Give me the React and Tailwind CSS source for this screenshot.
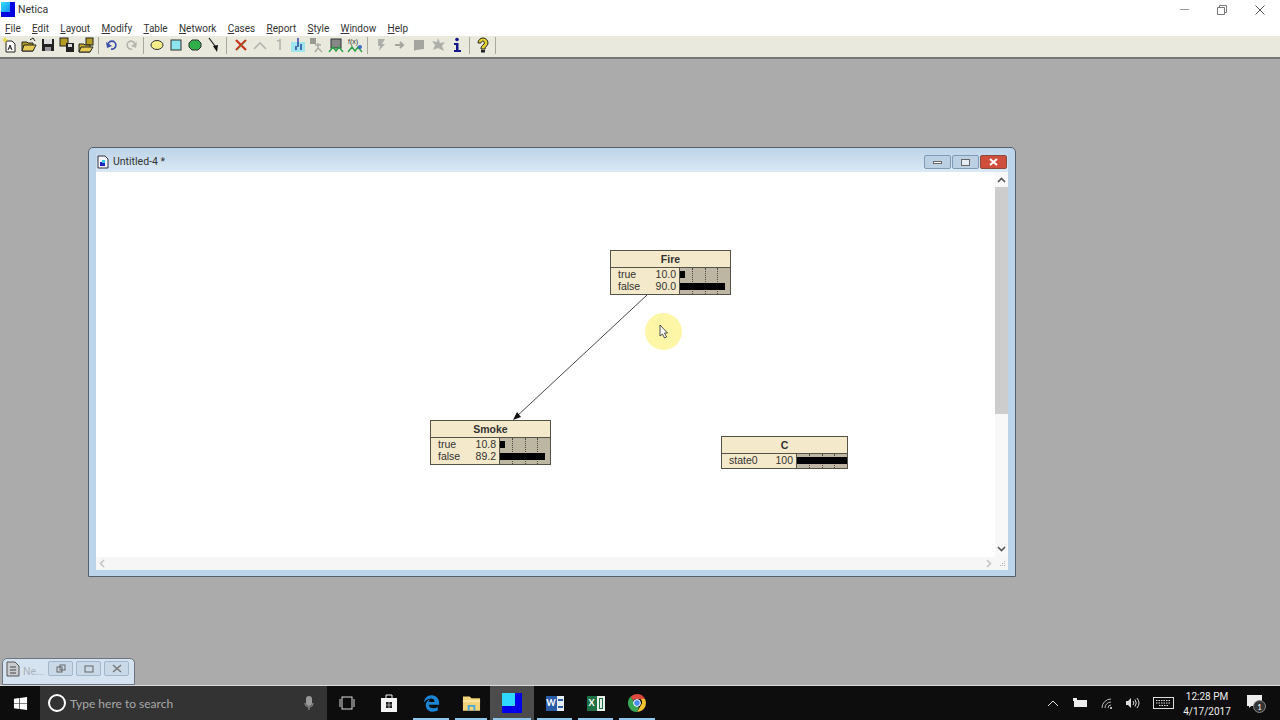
import { FaEdgeLegacy, FaWindows } from "react-icons/fa";

const menus = ["File", "Edit", "Layout", "Modify", "Table", "Network", "Cases", "Report", "Style", "Window", "Help"];

const Ico = ({ children }) => (
  <div className="flex h-[19px] w-[19px] items-center justify-center">
    <svg width="16" height="16" viewBox="0 0 16 16">{children}</svg>
  </div>
);

const Sep = () => <div className="mx-[3px] h-[17px] w-px bg-[#a8a89c]" />;

const Toolbar = () => (
  <div className="flex h-[21px] items-center bg-[#e9e9dd] pb-[3px]">
    <Ico>
      <path d="M4 4h6l3 3v8H4z" fill="#fff" stroke="#222" />
      <path d="M6 13l2-5 2 5M7 11h2" fill="none" stroke="#222" />
      <path d="M3 0l1 2 2 1-2 1-1 2-1-2-2-1 2-1z" fill="#e8d83a" />
    </Ico>
    <Ico>
      <path d="M1 5h5l1 1h5v8H1z" fill="#b39a24" stroke="#222" />
      <path d="M3 8h12l-3 6H1z" fill="#e6cc55" stroke="#222" />
      <path d="M9 3l3-2 2 3" fill="none" stroke="#222" />
    </Ico>
    <Ico>
      <rect x="2" y="2" width="12" height="12" fill="#222" />
      <rect x="4" y="2" width="8" height="5" fill="#ddd" />
      <rect x="5" y="10" width="6" height="4" fill="#999" />
    </Ico>
    <Ico>
      <rect x="1" y="1" width="8" height="8" fill="#b59c24" stroke="#222" />
      <rect x="7" y="6" width="8" height="9" fill="#222" />
      <rect x="9" y="7" width="4" height="3" fill="#ddd" />
    </Ico>
    <Ico>
      <rect x="8" y="1" width="7" height="7" fill="#b59c24" stroke="#222" />
      <path d="M1 7h5l1 1h5v7H1z" fill="#c9ae30" stroke="#222" />
      <path d="M3 10h12l-3 5H1z" fill="#e6cc55" stroke="#222" />
    </Ico>
    <Sep />
    <Ico>
      <path d="M4 9a4 4 0 1 1 3 3" fill="none" stroke="#3d4fa8" strokeWidth="1.6" />
      <path d="M2 5l1 6 5-2z" fill="#3d4fa8" />
    </Ico>
    <Ico>
      <path d="M12 9a4 4 0 1 0-3 3" fill="none" stroke="#b5b5b0" strokeWidth="1.6" />
      <path d="M14 5l-1 6-5-2z" fill="#b5b5b0" />
    </Ico>
    <Sep />
    <Ico>
      <ellipse cx="8" cy="8" rx="6" ry="4.5" fill="#f5ec8a" stroke="#333" />
    </Ico>
    <Ico>
      <rect x="3" y="3" width="10" height="10" fill="#8ce4ee" stroke="#333" />
    </Ico>
    <Ico>
      <path d="M5 3h6l3 3v4l-3 3H5l-3-3V6z" fill="#2fae4a" stroke="#333" />
    </Ico>
    <Ico>
      <path d="M3 1l6 8" stroke="#222" strokeWidth="1.2" />
      <path d="M7 9l5-1-1 7z" fill="#111" />
    </Ico>
    <div className="ml-[3px] mr-[4px] h-[17px] w-px bg-[#a8a89c]" />
    <Ico>
      <path d="M3 3l10 10" stroke="#c8321e" strokeWidth="2.2" />
      <path d="M13 3L3 13" stroke="#c8321e" strokeWidth="2.2" />
      <path d="M4 13L13 4" stroke="#5f9d45" strokeWidth="0.8" />
    </Ico>
    <Ico>
      <path d="M2 12l6-6 6 6" fill="none" stroke="#b5b5b0" strokeWidth="1.6" />
    </Ico>
    <Ico>
      <path d="M6 4l3-1v10" fill="none" stroke="#b5b5b0" strokeWidth="1.6" />
    </Ico>
    <Ico>
      <rect x="1" y="5" width="14" height="10" fill="#9fe6ec" />
      <path d="M8 1v9M6 13V9M11 13V7" stroke="#23399b" strokeWidth="1.4" />
    </Ico>
    <Ico>
      <rect x="1" y="1" width="6" height="6" fill="#9a9a94" />
      <path d="M9 6v5l-3 4M9 11l4 4M6 8h6" fill="none" stroke="#a9a9a3" strokeWidth="1.4" />
    </Ico>
    <Ico>
      <rect x="3" y="2" width="10" height="9" fill="#888" stroke="#333" />
      <path d="M1 15l4-5 3 4 3-4 4 5" fill="none" stroke="#2fa04a" strokeWidth="1.4" />
    </Ico>
    <Ico>
      <text x="1" y="7" fontSize="7" fontFamily="Liberation Sans, sans-serif" fill="#333">f(x)</text>
      <path d="M1 15l4-5 3 4 3-4 4 5" fill="none" stroke="#2fa04a" strokeWidth="1.4" />
      <circle cx="13" cy="10" r="2" fill="#3b6cc8" />
    </Ico>
    <Sep />
    <Ico>
      <path d="M5 2h7L9 7l3 0-6 7 1-5H5z" fill="#b0b0aa" />
    </Ico>
    <Ico>
      <path d="M3 8h8M8 5l3 3-3 3" fill="none" stroke="#a5a5a0" strokeWidth="2" />
    </Ico>
    <Ico>
      <path d="M3 3h10v9l-8 1-2 1z" fill="#a5a5a0" />
    </Ico>
    <Ico>
      <path d="M8 1l2 5 5-1-3 4 2 5-6-3-5 2 2-5-3-4 5 1z" fill="#b0b0aa" />
    </Ico>
    <Ico>
      <circle cx="8" cy="2.5" r="1.8" fill="#16168c" />
      <path d="M5 6h4.500v7H12v2H5v-2h2V8H5z" fill="#16168c" />
    </Ico>
    <Sep />
    <Ico>
      <path d="M8 1a5 5 0 0 1 5 5c0 3-3 3-3 6H6c0-3 1-3 3-5 1-1 0-3-1-3s-2 1-2 2H3a5 5 0 0 1 5-5z" fill="#e4d22e" stroke="#222" />
      <rect x="6" y="13" width="4" height="2.500" fill="#222" />
    </Ico>
    <Sep />
  </div>
);

const Bar = ({ value }) => (
  <div className="relative h-[12px]">
    <div className="absolute left-0 top-[3px] h-[7px] bg-black" style={{ width: `${value / 2}px` }} />
  </div>
);

const BeliefNode = ({ name, states, className }) => (
  <div className={`absolute flex flex-col border border-[#55524a] bg-[#f4e9ca] font-['Liberation_Sans',sans-serif] text-[10.5px] leading-[12px] text-[#333] ${className}`}>
    <div className="flex h-[17px] items-center justify-center border-b border-[#55524a] font-bold">{name}</div>
    <div className="flex flex-1">
      <div className="flex flex-1 flex-col">
        {states.map((s) => (
          <div key={s.label} className="flex h-[12px] justify-between pl-[7px] pr-[3px]">
            <span>{s.label}</span>
            <span>{s.text}</span>
          </div>
        ))}
      </div>
      <div className="relative w-[51px] border-l border-[#55524a] bg-[#bdb6a2]">
        <div className="absolute inset-0 flex justify-evenly">
          <div className="h-full border-l border-dotted border-[#4f4b42]" />
          <div className="h-full border-l border-dotted border-[#4f4b42]" />
          <div className="h-full border-l border-dotted border-[#4f4b42]" />
        </div>
        {states.map((s) => (
          <Bar key={s.label} value={s.value} />
        ))}
      </div>
    </div>
  </div>
);

const WinBtn = ({ className, children }) => (
  <div className={`flex h-[14px] items-center justify-center rounded-[2px] border ${className}`}>
    {children}
  </div>
);

const Chevron = ({ d }) => (
  <svg width="9" height="9" viewBox="0 0 9 9">
    <path d={d} fill="none" stroke="currentColor" strokeWidth="1.6" />
  </svg>
);

const DocWindow = () => (
  <div className="absolute left-[88px] top-[88px] flex h-[430px] w-[928px] flex-col rounded-t-[5px] border border-[#55606b] bg-[#bcd5ea] px-[7px] pb-[6px]">
    <div className="flex h-[24px] items-center justify-between bg-gradient-to-b from-[#bcd3e8] to-[#dbe9f5] pr-[1px] pt-[4px]">
      <div className="flex items-center gap-[4px] pl-[1px]">
        <svg width="12" height="14" viewBox="0 0 12 14">
          <path d="M1 1h7l3 3v9H1z" fill="#f4f6fa" stroke="#334" />
          <path d="M3 7h5v4H3z" fill="#1c24c8" />
          <path d="M5 5h3v3H5z" fill="#35c8ee" />
        </svg>
        <span className="font-['Roboto',sans-serif] text-[10.5px] text-[#333]">Untitled-4 *</span>
      </div>
      <div className="flex gap-[1px]">
        <WinBtn className="w-[27px] border-[#7f9ab5] bg-[#bcd0e4]">
          <div className="h-[3px] w-[9px] border border-[#666] bg-white" />
        </WinBtn>
        <WinBtn className="w-[27px] border-[#7f9ab5] bg-[#bcd0e4]">
          <div className="h-[7px] w-[9px] border border-[#666] bg-[#e4edf5]" />
        </WinBtn>
        <WinBtn className="w-[27px] border-[#8c4a3c] bg-[#cf4f3c]">
          <svg width="9" height="8" viewBox="0 0 9 8">
            <path d="M1 1l7 6M8 1L1 7" stroke="#fff" strokeWidth="2" />
          </svg>
        </WinBtn>
      </div>
    </div>
    <div className="relative flex flex-1 bg-white">
      <div className="flex flex-1 flex-col">
        <div className="relative flex-1">
          <svg className="absolute left-0 top-0" width="900" height="385">
            <line x1="551" y1="123" x2="420" y2="245" stroke="#333" strokeWidth="0.9" />
            <path d="M417 248l4-8 4 5z" fill="#111" />
          </svg>
          <BeliefNode
            name="Fire"
            className="left-[514px] top-[78px] h-[45px] w-[121px]"
            states={[
              { label: "true", text: "10.0", value: 10 },
              { label: "false", text: "90.0", value: 90 },
            ]}
          />
          <BeliefNode
            name="Smoke"
            className="left-[334px] top-[248px] h-[45px] w-[121px]"
            states={[
              { label: "true", text: "10.8", value: 10.8 },
              { label: "false", text: "89.2", value: 89.2 },
            ]}
          />
          <BeliefNode
            name="C"
            className="left-[625px] top-[264px] h-[33px] w-[127px]"
            states={[{ label: "state0", text: "100", value: 100 }]}
          />
          <div className="absolute left-[549px] top-[141px] h-[37px] w-[37px] rounded-full bg-[#fdf6a6]" />
          <svg className="absolute left-[563px] top-[152px]" width="10" height="15" viewBox="0 0 10 15">
            <path d="M1 1v11l2.500-2 2 4 2-1-2-4h3z" fill="#fff" stroke="#222" strokeWidth="0.8" />
          </svg>
        </div>
        <div className="flex h-[13px] items-center justify-between bg-[#f6f6f6] px-[2px] text-[#c4c4c4]">
          <Chevron d="M6 1L2.500 4.500 6 8" />
          <Chevron d="M3 1l3.500 3.500L3 8" />
        </div>
      </div>
      <div className="flex w-[13px] flex-col items-center bg-[#f8f8f8] text-[#555]">
        <div className="flex h-[15px] items-center pt-[1px]">
          <Chevron d="M1 6l3.500-3.500L8 6" />
        </div>
        <div className="h-[227px] w-full bg-[#cdcdcd]" />
        <div className="flex-1" />
        <div className="flex h-[15px] items-center pt-[1px]">
          <Chevron d="M1 3l3.500 3.500L8 3" />
        </div>
        <div className="flex h-[15px] w-full items-end justify-end bg-[#f6f6f6] p-[2px]">
          <svg width="8" height="8" viewBox="0 0 8 8">
            <path d="M6 1h1v1H6zM4 3h1v1H4zM6 3h1v1H6zM2 5h1v1H2zM4 5h1v1H4zM6 5h1v1H6z" fill="#b5b5b5" />
          </svg>
        </div>
      </div>
    </div>
  </div>
);

const MinBtn = ({ children }) => (
  <div className="flex h-[15px] w-[25px] items-center justify-center rounded-[2px] border border-[#a3b7cb] bg-[#c9d9e8]">
    <svg width="10" height="9" viewBox="0 0 10 9">{children}</svg>
  </div>
);

const MinWindow = () => (
  <div className="absolute bottom-0 left-[2px] flex h-[27px] w-[133px] items-start rounded-t-[5px] border border-[#6b7480] bg-[#d5e3f0] pl-[3px] pt-[2px]">
    <svg width="14" height="16" viewBox="0 0 14 16">
      <path d="M1 1h8l4 4v10H1z" fill="#c8ccd0" stroke="#555" />
      <path d="M4 6h6M4 9h6M4 12h6" stroke="#444" />
    </svg>
    <span className="ml-[3px] mt-[5px] w-[25px] font-['Roboto',sans-serif] text-[10.5px] leading-[12px] text-[#a9b2bb]">Ne...</span>
    <div className="flex gap-[3px]">
      <MinBtn><rect x="1" y="3" width="5" height="5" fill="none" stroke="#666" /><rect x="4" y="1" width="5" height="5" fill="none" stroke="#666" /></MinBtn>
      <MinBtn><rect x="1" y="2" width="8" height="6" fill="none" stroke="#666" /></MinBtn>
      <MinBtn><path d="M1 1l8 7M9 1L1 8" stroke="#777" strokeWidth="1.500" /></MinBtn>
    </div>
  </div>
);

const TaskIcon = ({ className, active, running, children }) => (
  <div className={`relative flex h-full items-center justify-center ${className} ${active ? "bg-[#4c4c4c]" : ""}`}>
    {children}
    {running && <div className="absolute bottom-0 left-[3px] right-[3px] h-[2px] bg-[#8fc7ee]" />}
  </div>
);

const Taskbar = () => (
  <div className="flex h-[34px] items-center bg-[#0e0d0d] font-['Lato',sans-serif] text-white">
    <div className="flex h-full w-[40px] items-center justify-center">
      <FaWindows size={15} color="#fff" />
    </div>
    <div className="flex h-full w-[287px] items-center bg-[#333333] pl-[8px] pr-[13px]">
      <div className="h-[18px] w-[18px] rounded-full border-[2px] border-white" />
      <span className="ml-[4px] mt-[1px] flex-1 text-[12px] text-[#a8a8a8]">Type here to search</span>
      <svg width="10" height="15" viewBox="0 0 10 15">
        <rect x="2" y="0" width="6" height="10" rx="3" fill="#9a9a9a" />
        <path d="M1 7c0 3 2 4 4 4s4-1 4-4M5 11v3" fill="none" stroke="#9a9a9a" />
      </svg>
    </div>
    <div className="flex h-full">
      <TaskIcon className="w-[40px]">
        <svg width="16" height="14" viewBox="0 0 16 14">
          <rect x="3" y="1" width="10" height="12" fill="none" stroke="#ddd" />
          <path d="M1 3v8M15 3v8" stroke="#ddd" />
        </svg>
      </TaskIcon>
      <TaskIcon className="w-[43px]">
        <svg width="18" height="20" viewBox="0 0 18 20">
          <path d="M1 5h16v14H1z" fill="#f4f4f4" />
          <path d="M6 5V2h6v3" fill="none" stroke="#f4f4f4" />
          <path d="M6 9h2.700v2.700H6zM9.300 9H12v2.700H9.300zM6 12.300h2.700V15H6zM9.300 12.300H12V15H9.300z" fill="#222" />
        </svg>
      </TaskIcon>
      <TaskIcon className="w-[42px]" running>
        <FaEdgeLegacy size={17} color="#1a86d8" />
      </TaskIcon>
      <TaskIcon className="w-[38px]" running>
        <svg width="19" height="17" viewBox="0 0 20 17">
          <path d="M1 1h7l2 2h9v13H1z" fill="#f3d478" />
          <rect x="1" y="5" width="18" height="2" fill="#f9e6a8" />
          <path d="M6 10h8v6h-2v-4H8v4H6z" fill="#4aa6d8" />
        </svg>
      </TaskIcon>
      <TaskIcon className="w-[44px]" active running>
        <svg width="20" height="20" viewBox="0 0 20 20">
          <rect width="20" height="20" fill="#0000e8" />
          <rect width="13" height="13" fill="#2fd8ff" />
        </svg>
      </TaskIcon>
      <TaskIcon className="w-[41px]" running>
        <div className="flex h-[15px] w-[18px] items-center bg-[#e8eef6]">
          <span className="flex h-full w-[11px] items-center justify-center bg-[#2b5ca8] text-[9px] font-bold">W</span>
          <div className="ml-[1px] h-[9px] w-[5px] border-y-2 border-[#2b5ca8]" />
        </div>
      </TaskIcon>
      <TaskIcon className="w-[41px]" running>
        <div className="flex h-[15px] w-[18px] items-center bg-[#e8f2ea]">
          <span className="flex h-full w-[10px] items-center justify-center bg-[#1e7145] text-[9px] font-bold">X</span>
          <div className="ml-[2px] h-[11px] w-[4px] border border-[#1e7145]" />
        </div>
      </TaskIcon>
      <TaskIcon className="w-[42px]" running>
        <svg width="18" height="18" viewBox="0 0 18 18">
          <path d="M9 0a9 9 0 0 1 8 5H9a4 4 0 0 0-4 2L2.700 2.600A9 9 0 0 1 9 0z" fill="#dd4b3e" />
          <path d="M17 5a9 9 0 0 1-8 13l4-7a4 4 0 0 0-.5-6z" fill="#f2c230" />
          <path d="M2.700 2.600L7 10a4 4 0 0 0 4 3l-2 5A9 9 0 0 1 2.700 2.600z" fill="#3aa757" />
          <circle cx="9" cy="9" r="3.400" fill="#4a8af4" stroke="#fff" />
        </svg>
      </TaskIcon>
    </div>
    <div className="ml-auto flex h-full items-center">
      <svg width="12" height="7" viewBox="0 0 12 7">
        <path d="M1 6l5-5 5 5" fill="none" stroke="#ddd" />
      </svg>
      <svg className="ml-[14px]" width="15" height="10" viewBox="0 0 15 10">
        <rect x="1" y="2" width="13" height="7" fill="#eee" />
        <rect x="0" y="0" width="4" height="3" fill="#eee" />
      </svg>
      <svg className="ml-[13px]" width="13" height="12" viewBox="0 0 13 12">
        <path d="M1 11a9 9 0 0 1 9-9M4 11a6 6 0 0 1 6-6M7 11a3 3 0 0 1 3-3" fill="none" stroke="#bbb" />
        <circle cx="10" cy="11" r="1" fill="#eee" />
      </svg>
      <svg className="ml-[11px]" width="15" height="12" viewBox="0 0 15 12">
        <path d="M1 4h2l3-3v10L3 8H1z" fill="#ddd" />
        <path d="M8 4a3 3 0 0 1 0 4M10 2.500a6 6 0 0 1 0 7M12 1a8 8 0 0 1 0 10" fill="none" stroke="#ddd" />
      </svg>
      <svg className="ml-[13px]" width="21" height="12" viewBox="0 0 21 12">
        <rect x="0.500" y="0.500" width="20" height="11" fill="none" stroke="#ddd" />
        <path d="M3 3.500h15M3 6h15M6 8.500h9" stroke="#ddd" strokeDasharray="1.500 1" />
      </svg>
      <div className="ml-[5px] flex w-[56px] flex-col items-center pt-[1px] font-['Roboto',sans-serif] text-[10px] leading-[15px] text-[#eee]">
        <span>12:28 PM</span>
        <span>4/17/2017</span>
      </div>
      <div className="relative ml-[12px] mr-[18px] h-[16px] w-[15px]">
        <svg width="15" height="15" viewBox="0 0 15 15">
          <path d="M0 0h15v11H4l-2 2v-2H0z" fill="#eee" />
        </svg>
        <div className="absolute left-[6px] top-[5px] flex h-[13px] w-[13px] items-center justify-center rounded-full border border-[#888] bg-[#333] text-[8px] leading-none text-white">1</div>
      </div>
    </div>
  </div>
);

const App = () => {
  return (
    <div className="flex h-[720px] w-[1280px] flex-col overflow-hidden bg-white font-['Roboto',sans-serif]">
      <div className="flex h-[18px] items-center justify-between pt-[1px]">
        <div className="flex items-center">
          <div className="ml-[1px] h-[15px] w-[14px] bg-[#0000e0]">
            <div className="h-[10px] w-[9px] bg-gradient-to-br from-[#35e0ff] to-[#1a8df0]" />
          </div>
          <span className="ml-[3px] text-[10.5px] text-[#333]">Netica</span>
        </div>
        <div className="flex items-center gap-[28px] pr-[15px]">
          <div className="h-px w-[9px] bg-[#999]" />
          <svg width="10" height="10" viewBox="0 0 10 10">
            <path d="M0.500 2.500h7v7h-7zM2.500 2.500v-2h7v7h-2" fill="none" stroke="#777" />
          </svg>
          <svg width="10" height="10" viewBox="0 0 10 10">
            <path d="M0.500 0.500l9 9M9.500 0.500l-9 9" stroke="#555" />
          </svg>
        </div>
      </div>
      <div className="flex h-[18px] items-center gap-[11.300px] pl-[5px] pt-[3px] text-[10px] text-[#333]">
        {menus.map((m) => (
          <span key={m}>
            <span className="underline">{m[0]}</span>
            {m.slice(1)}
          </span>
        ))}
      </div>
      <Toolbar />
      <div className="h-[2px] bg-[#777]" />
      <div className="relative flex-1 bg-[#ababab]">
        <DocWindow />
        <MinWindow />
      </div>
      <div className="h-px bg-[#dcdcdc]" />
      <Taskbar />
    </div>
  );
};

export default App;
